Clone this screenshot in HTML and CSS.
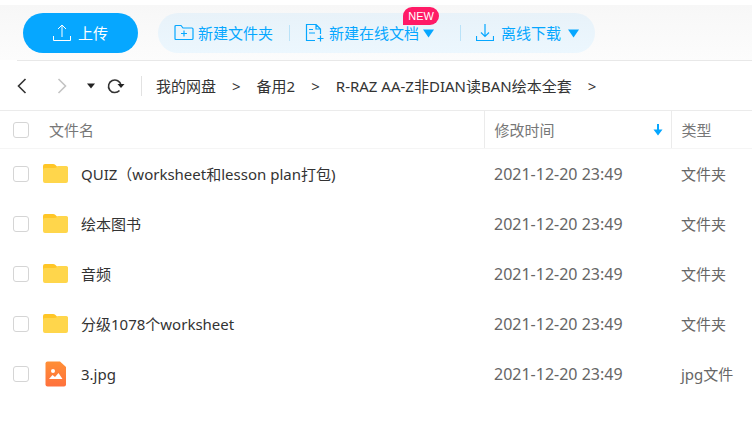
FILE: index.html
```html
<!DOCTYPE html>
<html lang="zh-CN">
<head>
<meta charset="utf-8">
<meta name="viewport" content="width=device-width, initial-scale=1">
<title>我的网盘</title>
<link rel="stylesheet" href="styles.css">
</head>
<body>
<svg class="sprite" aria-hidden="true">
  <symbol id="folder" viewBox="0 0 26 20">
    <path d="M0 8V2Q0 0 2 0H10Q11.500 0 12.500 1L14 2.500H23Q25 2.500 25 4.500V8Z" fill="#ffc626"/>
    <path d="M0 6Q0 4 2 4H11Q13 4 14 3Q14.500 2 16 2H23Q25 2 25 4V17Q25 19 23 19H2Q0 19 0 17Z" fill="#ffd64b"/>
  </symbol>
</svg>
<header class="toolbar">
  <button class="upload" type="button">
    <svg width="18" height="18" viewBox="0 0 18 18"><path d="M.5 12V16.500H17.500V12M9 13V1M5 5L9 1L13 5"/></svg>
    上传
  </button>
  <div class="actions">
    <button class="action" type="button">
      <svg width="20" height="18" viewBox="0 0 20 18"><path d="M1 2.500Q1 1.500 2 1.500H7L9 4H18Q19 4 19 5V14.500Q19 15.500 18 15.500H2Q1 15.500 1 14.500ZM10 6.500V12.500M7 9.500H13"/></svg>
      新建文件夹
    </button>
    <button class="action" type="button">
      <svg width="20" height="18" viewBox="0 0 20 18"><path d="M10 16.500H1.500V.5H11L15.500 5V10M11 .5V5H15.500M4 5.500H8M4 9H10M15.500 11.500V17.500M12.500 14.500H18.500"/></svg>
      新建在线文档
      <svg class="caret" width="11" height="9" viewBox="0 0 11 9"><path d="M0 .5H11L5.500 8.500Z"/></svg>
      <span class="badge">NEW</span>
    </button>
    <button class="action download" type="button">
      <svg width="18" height="18" viewBox="0 0 18 18"><path d="M.5 12V16.500H17.500V12M9 0V12.500M5 8.500L9 12.500L13 8.500"/></svg>
      离线下载
      <svg class="caret" width="11" height="9" viewBox="0 0 11 9"><path d="M0 .5H11L5.500 8.500Z"/></svg>
    </button>
  </div>
</header>
<nav class="path">
  <div class="history">
    <button type="button" aria-label="后退"><svg width="10" height="16" viewBox="0 0 10 16"><path d="M8.500 1L1.500 8L8.500 15"/></svg></button>
    <button class="forward" type="button" aria-label="前进"><svg width="10" height="16" viewBox="0 0 10 16"><path d="M1.500 1L8.500 8L1.500 15"/></svg></button>
    <button type="button" aria-label="历史记录"><svg class="solid" width="8" height="6" viewBox="0 0 8 6"><path d="M0 .5H8L4 5.500Z"/></svg></button>
    <button type="button" aria-label="刷新"><svg width="18" height="16" viewBox="0 0 18 16"><path d="M12.500 12.500A6.300 6.300 0 1 1 14 7"/><path class="tip" d="M10.500 6H17.500L14 10Z"/></svg></button>
  </div>
  <ol class="crumbs">
    <li><a href="#">我的网盘</a></li>
    <li><a href="#">备用2</a></li>
    <li><a href="#">R-RAZ AA-Z非DIAN读BAN绘本全套</a></li>
  </ol>
</nav>
<table class="files">
  <colgroup><col class="col-check"><col><col class="col-time"><col class="col-type"></colgroup>
  <thead>
    <tr>
      <th><input type="checkbox" aria-label="全选"></th>
      <th class="head-name">文件名</th>
      <th><button class="sort" type="button">修改时间
        <svg width="10" height="12" viewBox="0 0 10 12"><path d="M4 0H6V5.500H9.500L5 11.500L.5 5.500H4Z"/></svg></button></th>
      <th>类型</th>
    </tr>
  </thead>
  <tbody>
    <tr>
      <td><input type="checkbox" id="f1"></td>
      <td><label class="name" for="f1"><svg class="icon" width="26" height="20"><use href="#folder"/></svg><span>QUIZ（worksheet和lesson plan打包)</span></label></td>
      <td>2021-12-20 23:49</td><td>文件夹</td>
    </tr>
    <tr>
      <td><input type="checkbox" id="f2"></td>
      <td><label class="name" for="f2"><svg class="icon" width="26" height="20"><use href="#folder"/></svg><span>绘本图书</span></label></td>
      <td>2021-12-20 23:49</td><td>文件夹</td>
    </tr>
    <tr>
      <td><input type="checkbox" id="f3"></td>
      <td><label class="name" for="f3"><svg class="icon" width="26" height="20"><use href="#folder"/></svg><span>音频</span></label></td>
      <td>2021-12-20 23:49</td><td>文件夹</td>
    </tr>
    <tr>
      <td><input type="checkbox" id="f4"></td>
      <td><label class="name" for="f4"><svg class="icon" width="26" height="20"><use href="#folder"/></svg><span>分级1078个worksheet</span></label></td>
      <td>2021-12-20 23:49</td><td>文件夹</td>
    </tr>
    <tr>
      <td><input type="checkbox" id="f5"></td>
      <td><label class="name" for="f5">
        <svg class="icon" width="26" height="26" viewBox="0 0 26 26">
          <defs><linearGradient id="warm" x2="0" y2="1"><stop stop-color="#ff8f36"/><stop offset="1" stop-color="#ff713d"/></linearGradient></defs>
          <path fill="url(#warm)" d="M4.500 .5H17L23 6V23.500Q23 25.500 21 25.500H4.500Q2.500 25.500 2.500 23.500V2.500Q2.500 .5 4.500 .5Z"/>
          <circle cx="10" cy="10" r="2" fill="#fff"/>
          <path fill="#fff" d="M6 18L9.500 14L12 16L15.500 12L19.500 18Z"/>
        </svg><span>3.jpg</span></label></td>
      <td>2021-12-20 23:49</td><td>jpg文件</td>
    </tr>
  </tbody>
</table>
</body>
</html>
```
FILE: styles.css
```css
* {
  box-sizing: border-box;
}

body {
  margin: 0;
  padding-top: 5px;
  background: #fff;
  color: #333;
  font: 15px/20px "Noto Sans", "Noto Sans CJK SC", sans-serif;
}

.sprite {
  display: none;
}

button {
  margin: 0;
  padding: 0;
  border: 0;
  background: none;
  color: inherit;
  font: inherit;
}

svg {
  flex: none;
  fill: none;
  stroke: currentColor;
}

.toolbar {
  display: flex;
  gap: 20px;
  padding: 8px 23px 7px;
  background: linear-gradient(#f7f7f7, #fcfcfc);
}

.upload,
.action {
  display: flex;
  align-items: center;
  white-space: nowrap;
}

.upload {
  justify-content: center;
  gap: 7px;
  width: 115px;
  height: 40px;
  border-radius: 20px;
  background: #06a7ff;
  color: #fff;
}

.actions {
  display: flex;
  align-items: center;
  height: 40px;
  padding: 0 16px;
  border-radius: 20px;
  background: linear-gradient(#e8f2f9, #ecf7fe);
  color: #06a7ff;
}

.action {
  position: relative;
  gap: 4px;
}

.action svg {
  stroke-width: 1.2;
}

.action + .action {
  margin-left: 16px;
  padding-left: 16px;
  background: linear-gradient(#b9e2f8, #b9e2f8) left center / 1px 16px no-repeat;
}

.action + .download {
  gap: 7px;
  margin-left: 26px;
}

.caret {
  fill: currentColor;
  stroke: none;
}

.badge {
  position: absolute;
  right: -5px;
  top: -16px;
  width: 36px;
  border-radius: 9px 9px 9px 0;
  background: #ff1a66;
  color: #fff;
  font-family: "Liberation Sans", sans-serif;
  font-size: 11px;
  line-height: 18px;
  text-align: center;
}

.path {
  display: flex;
  align-items: center;
  height: 50px;
  margin-left: 17px;
  border-top: 1px solid #e8e8e8;
}

.history {
  display: flex;
  align-items: center;
  gap: 20px;
  height: 20px;
  padding-right: 16px;
  border-right: 1px solid #e2e2e2;
}

.history button {
  display: flex;
}

.history button:first-child {
  margin-right: 10px;
}

.history button:last-child {
  margin-left: -8px;
}

.history path {
  stroke-width: 1.6;
}

.forward {
  color: #c4c4c4;
}

.history .solid,
.history .tip {
  fill: #222;
  stroke: none;
}

.crumbs {
  display: flex;
  margin: 0;
  padding: 0 0 0 14px;
  list-style: none;
  white-space: nowrap;
}

.crumbs li::after {
  content: ">";
  margin: 0 16px;
}

.crumbs a {
  color: inherit;
  text-decoration: none;
}

.files {
  width: 100%;
  border-collapse: collapse;
  table-layout: fixed;
}

.col-check {
  width: 43px;
}

.col-time {
  width: 187px;
}

.col-type {
  width: 81px;
}

th,
td {
  padding: 0 0 0 10px;
  color: #666;
  font-weight: 400;
  text-align: left;
  white-space: nowrap;
}

th {
  height: 38px;
  border-top: 1px solid #ebebeb;
  border-bottom: 1px solid #f5f5f5;
  color: #777;
}

th:nth-child(n + 3) {
  border-left: 1px solid #ebebeb;
}

td {
  height: 50px;
}

th:first-child,
td:first-child {
  padding-left: 13px;
}

th.head-name {
  padding-left: 6px;
}

td:nth-child(2) {
  padding-left: 0;
}

td:nth-child(3) {
  font-size: 16px;
}

input {
  display: block;
  width: 16px;
  height: 16px;
  margin: 0;
  appearance: none;
  border: 1px solid #d5d5d5;
  border-radius: 3px;
  background: #fff;
}

.sort {
  display: flex;
  align-items: center;
  justify-content: space-between;
  width: 100%;
  padding-right: 8px;
}

.sort svg {
  fill: #06a7ff;
  stroke: none;
}

.name {
  display: flex;
  align-items: center;
  gap: 12px;
  color: #333;
}

.icon {
  stroke: none;
}
```
